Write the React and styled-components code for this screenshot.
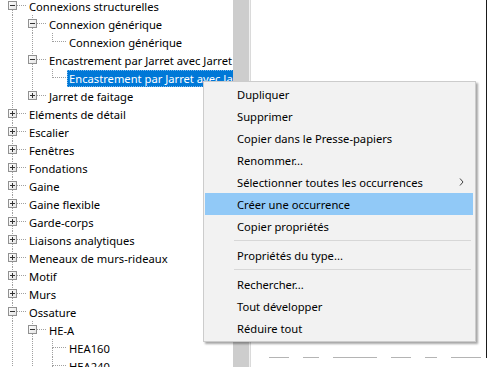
import React from "react";
import styled, { createGlobalStyle } from "styled-components";

const GlobalStyle = createGlobalStyle`
  html, body {
    margin: 0;
    padding: 0;
    background: #ffffff;
  }
  body {
    font-family: "Noto Sans", "Open Sans", sans-serif;
    font-size: 11.2px;
    color: #000000;
  }
`;

const Screen = styled.div`
  position: relative;
  width: 490px;
  height: 367px;
  overflow: hidden;
  display: flex;
  background: #ffffff;
`;

const TreePane = styled.div`
  width: 233px;
  flex: none;
  overflow: hidden;
  padding-left: 2px;
  box-sizing: border-box;
`;

const TreeScroll = styled.div`
  margin-top: -3px;
  display: flex;
  flex-direction: column;
`;

const Row = styled.div`
  height: 18px;
  display: flex;
  align-items: center;
  white-space: nowrap;
`;

const Label = styled.span`
  margin-left: 1px;
  padding: 0 2px;
  height: 17px;
  line-height: 17px;
  box-sizing: border-box;
  background: ${(p) => (p.$selected ? "#0078d7" : "transparent")};
  color: ${(p) => (p.$selected ? "#ffffff" : "#000000")};
  outline: ${(p) => (p.$selected ? "1px dotted #7fb9ea" : "none")};
  outline-offset: -1px;
`;

const Scrollbar = styled.div`
  width: 16px;
  flex: none;
  background: #cdcdcd;
  border-right: 1px solid #f0f0f0;
`;

const Divider = styled.div`
  width: 1px;
  flex: none;
  background: #dadada;
`;

const RightPane = styled.div`
  flex: 1;
  display: flex;
  flex-direction: column;
  justify-content: flex-end;
  margin: 0 3px 9px 0;
  border-right: 1px solid #1a1a1a;
`;

const GridFoot = styled.div`
  display: flex;
  gap: 14px;
  padding-left: 18px;
  height: 1px;
`;

const FootDash = styled.span`
  height: 1px;
  width: ${(p) => p.$w}px;
  background: #b4b4b4;
`;

const Menu = styled.div`
  position: absolute;
  left: 203px;
  top: 81px;
  width: 273px;
  box-sizing: border-box;
  padding: 1px 2px 2px 1px;
  background: #f2f2f2;
  border: 1px solid #cccccc;
  box-shadow: 2px 2px 2px rgba(0, 0, 0, 0.35);
`;

const MenuItem = styled.div`
  height: 22px;
  display: flex;
  align-items: center;
  justify-content: space-between;
  padding: 0 9px 0 32px;
  background: ${(p) => (p.$hover ? "#91c9f7" : "transparent")};
  white-space: nowrap;
`;

const Separator = styled.div`
  height: 1px;
  background: #d7d7d7;
  margin: 3px 2px 3px 29px;
`;

const Chevron = () => (
  <svg width="5" height="8" viewBox="0 0 5 8" style={{ display: "block" }}>
    <path d="M1 0.5 L4 4 L1 7.5" fill="none" stroke="#444444" strokeWidth="1" />
  </svg>
);

const Cell = ({ width = 20, vertical, up, down, horiz, expander }) => (
  <svg width={width} height="18" style={{ flex: "none", display: "block" }}>
    {vertical && (
      <line x1="10.5" y1="0" x2="10.5" y2="18" stroke="#a0a0a0" strokeDasharray="1 1" />
    )}
    {up && <line x1="10.5" y1="0" x2="10.5" y2="9" stroke="#a0a0a0" strokeDasharray="1 1" />}
    {down && <line x1="10.5" y1="9" x2="10.5" y2="18" stroke="#a0a0a0" strokeDasharray="1 1" />}
    {horiz && <line x1="11" y1="8.5" x2={width} y2="8.5" stroke="#a0a0a0" strokeDasharray="1 1" />}
    {expander && (
      <g>
        <rect x="6.5" y="4.5" width="8" height="8" fill="url(#boxfill)" stroke="#919191" />
        <line x1="8" y1="8.5" x2="13" y2="8.5" stroke="#333333" />
        {expander === "+" && <line x1="10.5" y1="6" x2="10.5" y2="11" stroke="#333333" />}
      </g>
    )}
  </svg>
);

// level, label, expander, last sibling?, ancestors that continue
const rows = [
  { l: 0, t: "Connexions structurelles", e: "-", last: false, anc: [] },
  { l: 1, t: "Connexion générique", e: "-", last: false, anc: [true] },
  { l: 2, t: "Connexion générique", last: true, anc: [true, true] },
  { l: 1, t: "Encastrement par Jarret avec Jarret au faîtage", e: "-", last: false, anc: [true] },
  { l: 2, t: "Encastrement par Jarret avec Jarret au faîtage", last: true, anc: [true, true], sel: true },
  { l: 1, t: "Jarret de faitage", e: "+", last: true, anc: [true] },
  { l: 0, t: "Eléments de détail", e: "+", anc: [] },
  { l: 0, t: "Escalier", e: "+", anc: [] },
  { l: 0, t: "Fenêtres", e: "+", anc: [] },
  { l: 0, t: "Fondations", e: "+", anc: [] },
  { l: 0, t: "Gaine", e: "+", anc: [] },
  { l: 0, t: "Gaine flexible", e: "+", anc: [] },
  { l: 0, t: "Garde-corps", e: "+", anc: [] },
  { l: 0, t: "Liaisons analytiques", e: "+", anc: [] },
  { l: 0, t: "Meneaux de murs-rideaux", e: "+", anc: [] },
  { l: 0, t: "Motif", e: "+", anc: [] },
  { l: 0, t: "Murs", e: "+", anc: [] },
  { l: 0, t: "Ossature", e: "-", anc: [] },
  { l: 1, t: "HE-A", e: "-", anc: [true] },
  { l: 2, t: "HEA160", anc: [true, true] },
  { l: 2, t: "HEA240", anc: [true, true] },
];

const menu = [
  { t: "Dupliquer" },
  { t: "Supprimer" },
  { t: "Copier dans le Presse-papiers" },
  { t: "Renommer..." },
  { t: "Sélectionner toutes les occurrences", sub: true },
  { t: "Créer une occurrence", hover: true },
  { t: "Copier propriétés" },
  { sep: true },
  { t: "Propriétés du type..." },
  { sep: true },
  { t: "Rechercher..." },
  { t: "Tout développer" },
  { t: "Réduire tout" },
];

export default function App() {
  return (
    <>
      <GlobalStyle />
      <svg width="0" height="0" style={{ position: "absolute" }}>
        <defs>
          <linearGradient id="boxfill" x1="0" y1="0" x2="1" y2="1">
            <stop offset="0" stopColor="#ffffff" />
            <stop offset="1" stopColor="#e3e3e3" />
          </linearGradient>
        </defs>
      </svg>
      <Screen>
        <TreePane>
          <TreeScroll>
            {rows.map((r, i) => (
              <Row key={i}>
                {r.anc.map((cont, j) => (
                  <Cell key={j} vertical={cont} />
                ))}
                <Cell width={24} up down={!r.last} horiz expander={r.e} />
                <Label $selected={r.sel}>{r.t}</Label>
              </Row>
            ))}
          </TreeScroll>
        </TreePane>
        <Scrollbar />
        <Divider />
        <RightPane>
          <GridFoot>
            <FootDash $w={20} />
            <FootDash $w={16} />
            <FootDash $w={44} />
            <FootDash $w={20} />
            <FootDash $w={12} />
            <FootDash $w={30} />
          </GridFoot>
        </RightPane>
        <Menu>
          {menu.map((m, i) =>
            m.sep ? (
              <Separator key={i} />
            ) : (
              <MenuItem key={i} $hover={m.hover}>
                <span>{m.t}</span>
                {m.sub && <Chevron />}
              </MenuItem>
            )
          )}
        </Menu>
      </Screen>
    </>
  );
}
